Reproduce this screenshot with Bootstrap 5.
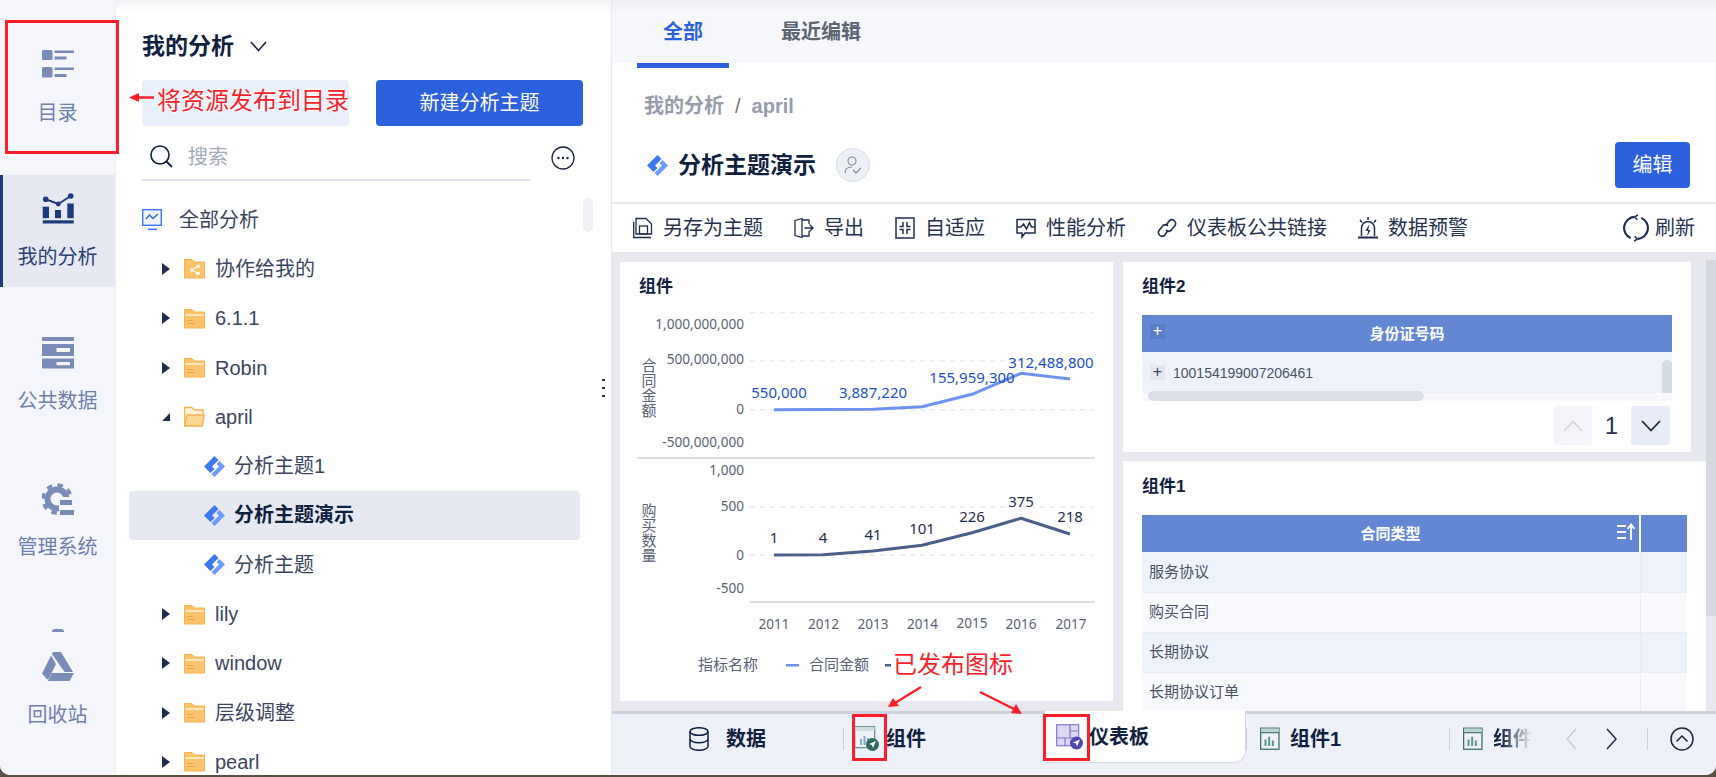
<!DOCTYPE html>
<html lang="zh-CN">
<head>
<meta charset="utf-8">
<title>我的分析</title>
<link rel="stylesheet" href="https://cdn.jsdelivr.net/npm/bootstrap@5.3.0/dist/css/bootstrap.min.css">
<style>
html,body{height:777px;overflow:hidden;background:#5b5140}
body{font-family:"Liberation Sans","Noto Sans CJK SC",sans-serif;font-size:20px;color:#3a4560;line-height:28px}
.app-root{position:relative;width:1716px;height:775px;background:#fff;border-radius:0 0 10px 10px;overflow:hidden}
.side-rail{width:116px;background:#f4f6fb;border-right:1px solid #eceef3;padding-top:31px}
.rail-item{height:112px;padding-top:18px;color:#6f7fae;flex:none}
.rail-item svg{display:block;height:32px;margin-bottom:18px}
.rail-on{background:#e6e9f2;border-left:3px solid #1f3a7a;color:#2b3f74;padding-right:3px}
.gap-32{margin-top:32px}.gap-34{margin-top:34px}.gap-56{margin-top:56px}
.dome{position:absolute;left:52px;top:629px;width:12px;height:3px;border-radius:6px 6px 0 0;background:#7a8bb8}
.tree-side{width:495px;position:relative;background:linear-gradient(#f1f2f4,#fff 12px);padding-top:30px;overflow:hidden}
.tree-head{height:32px;padding-left:26px;color:#10213f;font-size:23px}
.btn-pair{margin:18px 0 0 26px;gap:27px}
.btn-pale{width:207px;height:46px;background:#eaf0fb;border-radius:4px}
.btn-blue{width:207px;height:46px;background:#2c60dc;border:0;border-radius:4px;font-size:20px;line-height:28px;color:#fff;padding:0}
.find-line{margin:8px 0 0 26px;width:388px;height:47px;padding:0 0 0 8px;border-bottom:2px solid #dfe2ea;color:#a3a9b7;gap:15px}
.dots-circle{position:absolute;left:435px;top:146px}
.tree-list{margin-top:14px}
.tree-item{height:49.3px;margin-left:13px;width:451px;border-radius:4px}
.lv0{padding-left:13px;gap:17px}
.lv1{padding-left:33px}
.lv2{padding-left:75px;gap:9px}
.tree-pick{background:#e6e9f2;color:#10213f;font-weight:700}
.tri{width:8px;height:12px;margin-right:14px;flex:none}
.fold{width:21px;height:21px;margin-right:10px;flex:none}
.thumb-v{position:absolute;left:467px;top:198px;width:10px;height:34px;border-radius:5px;background:#f0f1f5}
.drag-dots{position:absolute;left:486px;top:376px;width:3px;height:22px;background:radial-gradient(circle,#1b2740 1.2px,transparent 1.5px) 0 0/3px 8px repeat-y}
.main-side{flex:1;min-width:0;border-left:1px solid #e8e9ef}
.tab-strip{height:63px;background:linear-gradient(#eff0f3,#f7f8fc 12px);font-weight:700;padding-left:25px}
.tab-a{width:92px;color:#2c60dc}
.tab-b{margin-left:52px;width:80px;color:#5d6472}
.tab-mark{height:5px;width:92px;margin-left:25px;background:#2c60dc}
.crumb{height:74px;padding:24px 0 0 32px;font-weight:700;color:#969ca9}
.crumb i{font-style:normal;margin:0 11px;font-weight:400;color:#6a7080}
.title-line{height:46px;padding:0 26px 0 35px;margin-bottom:14px;color:#10213f;font-size:23px}
.title-line b{margin-left:10px}
.who{width:34px;height:34px;border-radius:50%;background:#edf0f4;border:1px solid #d9dde5;margin-left:20px}
.btn-edit{width:75px;height:46px;background:#2c60dc;border:0;border-radius:4px;color:#fff;font-size:20px;padding:0}
.tool-line{height:50px;border-top:2px solid #e8e9f0;padding:0 21px 0 21px;gap:31px}
.tool-it{gap:10px;color:#26324f}
.tool-it svg{width:20px;height:22px;flex:none}
.refresh-it{gap:6px}
.tool-it .spin-ic{width:26px;height:28px}
.work{height:459px;background:#e8e9ee;padding:10px 0 0 8px;position:relative;overflow:hidden;gap:10px}
.panel-chart{width:493px;height:439px;background:#fff;flex:none}
.panel-chart svg{display:block}
.right-stack{width:583px;flex:none;gap:9px}
.panel-a{width:568px;height:190px;background:#fff;padding:0 19px;position:relative}
.panel-b{width:583px;height:250px;background:#fff;padding:0 19px}
.pn-title{font-size:17px;font-weight:700;color:#10213f;height:53px;padding-top:11px;line-height:28px}
.pn-title-b{padding-top:12px}
.rail-thumb{position:absolute;right:0;top:8px;width:10px;height:356px;background:#d5d8df}
.head-blue{height:37px;width:530px;background:#6387d2;color:#fff;font-size:15px;font-weight:700;position:relative}
.plus-hd{position:absolute;left:8px;top:9px;width:15px;height:15px;background:#5a7dc8;font-weight:400;font-size:17px;line-height:14px;text-align:center}
.row-a{height:41px;width:530px;background:#eef2fb;font-size:14px;color:#4a5268;position:relative;padding-left:8px}
.plus-bx{width:15px;height:15px;background:#e4e7ef;font-size:16px;line-height:14px;text-align:center;color:#3a4560;margin-right:8px}
.row-foot{height:8px;width:530px;background:#f7f9fd;position:relative}
.sc-h{position:absolute;left:6px;top:-2px;width:276px;height:10px;border-radius:5px;background:#dcdfe8}
.sc-v{position:absolute;right:0;top:8px;width:10px;height:36px;border-radius:5px;background:#d6dae3}
.pager{margin-top:5px;width:528px;height:39px;color:#26324f;font-size:24px}
.pg-off{width:38px;height:39px;border-radius:3px;background:#f3f5fa}
.pg-on{width:39px;height:39px;border-radius:3px;background:#e8ecf6}
.pg-num{width:39px;text-align:center}
.data-grid{width:545px;border-collapse:collapse;margin:1px 0 0;table-layout:fixed;--bs-table-bg:transparent}
.col-wide{width:498px}
.col-thin{width:47px}
.data-grid th{height:37px;background:#6387d2;color:#fff;font-size:15px;font-weight:700;text-align:center;vertical-align:middle;padding:0;border:0;border-right:2px solid #fff;position:relative;line-height:20px}
.data-grid th:last-child{border-right:0}
.data-grid td{height:40px;padding:0 7px;font-size:15px;color:#4a5268;border:0;border-right:1px solid #e8ecf5;border-bottom:1px solid #e8ecf5;line-height:20px;vertical-align:middle}
.data-grid tr:nth-child(odd) td{background:#eef2fb}
.data-grid tr:nth-child(even) td{background:#f7f9fd}
.data-grid td:last-child{border-right:0}
.sort-ic{position:absolute;right:4px;top:8px}
.dock{height:64px;background:#eef1f7;border-top:3px solid #cdd2de;padding-bottom:12px;position:relative;color:#10213f;font-weight:700}
.dock-cell{height:49px;flex:none}
.dk-a{width:231px;justify-content:center;gap:17px}
.dk-b{width:201px;padding-left:10px;position:relative}
.dk-c{width:201px;padding-left:11px;background:#fff;margin-top:-3px;height:52px;border:1px solid #d5d9e3;border-top:0;border-left:0;border-radius:0 0 12px 0}
.dk-d{width:202px;padding-left:13px}
.dk-e{width:82px;padding-left:13px;overflow:hidden;-webkit-mask-image:linear-gradient(90deg,#000 62%,transparent);mask-image:linear-gradient(90deg,#000 62%,transparent)}
.dk-tx{margin-left:8px}
.dk-tx-b{margin-left:6px}
.dk-sep{width:1px;height:22px;background:#c9ced9;flex:none}
.dk-nav{padding-left:33px}
.dk-nav .sp1{margin-left:29px}
.dk-nav .dk-sep{margin-left:29px}
.dk-nav .up{margin-left:22px}
.mark-box{position:absolute;border:3px solid #fb1f2b}
.mark-a{left:5px;top:20px;width:114px;height:134px}
.mark-b{left:852px;top:714px;width:35px;height:47px}
.mark-c{left:1043px;top:714px;width:47px;height:47px}
.note{position:absolute;font-size:24px;line-height:30px;color:#fb1f2b;text-shadow:0 0 2px #fff,0 0 3px #fff,1px 1px 1px #fff,-1px -1px 1px #fff}
.note-a{left:157px;top:86px}
.note-b{left:893px;top:650px}
.arrows{position:absolute;left:0;top:0;pointer-events:none}
svg text{font-family:"Noto Sans","Noto Sans CJK SC",sans-serif}
svg .cjk-t{font-family:"Noto Sans CJK SC",sans-serif}
svg .v-txt{font-family:"Noto Sans CJK SC",sans-serif;writing-mode:vertical-rl}
</style>
</head>
<body>
<svg width="0" height="0" class="position-absolute">
<defs>
<symbol id="tri-r" viewBox="0 0 8 12"><path d="M0 0L8 6L0 12Z" fill="#1f2d4d"/></symbol>
<symbol id="tri-d" viewBox="0 0 8 12"><path d="M8 2V10H0Z" fill="#1f2d4d"/></symbol>
<symbol id="folder" viewBox="0 0 21 21"><path d="M.5 1.5h7.5l2.5 2.5h10v16H.5Z" fill="#fdc36b" stroke="#f6b14c"/><rect x="1.5" y="6" width="18" height="2" fill="#ffe8bd"/><rect x="3" y="12" width="6" height="1" fill="#eaa548"/><rect x="3" y="15" width="8" height="1" fill="#eaa548"/></symbol>
<symbol id="gem" viewBox="0 0 21 21"><path d="M10.500 0L14.500 4L8 10.500L10.500 13L6.500 17L0 10.500Z" fill="#3f77f0"/><path d="M15.500 5L21 10.500L10.500 21L7.500 18L15 10.500L12.500 8Z" fill="#6d9bff"/></symbol>
<symbol id="sheet" viewBox="0 0 24 25"><rect x=".7" y=".7" width="20" height="23" fill="none" stroke="#3d6f6a" stroke-width="1.4"/><rect x="1" y="1" width="19.5" height="4.5" fill="#bcd3cf"/><rect x="1" y="5" width="19.5" height="1.2" fill="#3d6f6a"/><path d="M6 13v7M10 10v10M14 14v6" stroke="#5a9690" stroke-width="2.2"/></symbol>
</defs>
</svg>
<div class="app-root d-flex">
  <aside class="side-rail d-flex flex-column flex-shrink-0 text-center">
    <div class="rail-item d-flex flex-column align-items-center">
      <svg width="32" viewBox="0 0 32 32" fill="#7a8bb8"><rect y="1" width="10.5" height="10" rx="1.5"/><rect x="12.5" y="1.5" width="19.5" height="2.5"/><rect x="12.5" y="7.5" width="12" height="3"/><rect y="18" width="10.5" height="10.5" rx="1.5"/><rect x="12.5" y="18.5" width="19.5" height="2.5"/><rect x="12.5" y="25" width="12" height="3"/></svg>
      <span>目录</span>
    </div>
    <div class="rail-item rail-on gap-32 d-flex flex-column align-items-center">
      <svg width="34" viewBox="41 193 34 32" fill="#1f3a7a"><polyline points="45.7,199.3 58.3,204 70.7,196" fill="none" stroke="#1f3a7a" stroke-width="2"/><circle cx="45.7" cy="199.3" r="2.8"/><circle cx="58.3" cy="204" r="2.4"/><circle cx="70.7" cy="196" r="2.8"/><rect x="42.7" y="206.7" width="6.3" height="11.5"/><rect x="55" y="210" width="6" height="8.2"/><rect x="67.3" y="203.5" width="6.4" height="14.7"/><rect x="42.7" y="220.3" width="31" height="3.2"/></svg>
      <span>我的分析</span>
    </div>
    <div class="rail-item gap-32 d-flex flex-column align-items-center">
      <svg width="32" viewBox="42 337 32 32"><rect x="42" y="337" width="32" height="4" fill="#7a8bb8"/><rect x="42" y="344" width="32" height="12" fill="#7a8bb8"/><rect x="56.5" y="348" width="13.5" height="4" fill="#f4f6fb"/><rect x="42" y="358.500" width="32" height="10" fill="#7a8bb8"/><rect x="56.5" y="362" width="13.500" height="3.200" fill="#f4f6fb"/></svg>
      <span>公共数据</span>
    </div>
    <div class="rail-item gap-34 d-flex flex-column align-items-center">
      <svg width="32" viewBox="0 0 32 32"><circle cx="15" cy="16" r="9.500" fill="none" stroke="#7a8bb8" stroke-width="6"/><circle cx="15" cy="16" r="14" fill="none" stroke="#7a8bb8" stroke-width="3.500" stroke-dasharray="5.500 5.500"/><rect x="17" y="14" width="15" height="18" fill="#f4f6fb"/><rect x="18" y="17" width="12" height="5" fill="#7a8bb8"/><rect x="18" y="27" width="14" height="5" fill="#7a8bb8"/></svg>
      <span>管理系统</span>
    </div>
    <div class="rail-item gap-56 d-flex flex-column align-items-center">
      <svg width="32" viewBox="0 -1 32 32" fill="#7a8bb8"><path d="M11 0H19L31 20H22.500L10 2Z"/><path d="M9 3.500L14 12L6.500 27.500Q4 27 3 25L0 21.500Z"/><path d="M10 21H32L27.500 29H6Z"/></svg>
      <span>回收站</span>
    </div>
    <div class="dome"></div>
  </aside>

  <section class="tree-side flex-shrink-0">
    <div class="tree-head d-flex align-items-center fw-bold">
      <span>我的分析</span>
      <svg class="ms-3" width="17" height="11" viewBox="0 0 17 11"><path d="M1 1L8.500 9.500L16 1" fill="none" stroke="#1b2740" stroke-width="1.600"/></svg>
    </div>
    <div class="btn-pair d-flex">
      <div class="btn-pale"></div>
      <button class="btn btn-blue" type="button">新建分析主题</button>
    </div>
    <div class="find-line d-flex align-items-center">
      <svg width="23" height="23" viewBox="0 0 23 23"><circle cx="10" cy="10" r="9" fill="none" stroke="#10213f" stroke-width="1.600"/><path d="M16.500 16.500L22 22" stroke="#10213f" stroke-width="1.800"/></svg>
      <span>搜索</span>
    </div>
    <svg class="dots-circle" width="24" height="24" viewBox="0 0 24 24"><circle cx="12" cy="12" r="11" fill="none" stroke="#1b2740" stroke-width="1.300"/><circle cx="7.500" cy="12" r="1.200" fill="#1b2740"/><circle cx="12" cy="12" r="1.200" fill="#1b2740"/><circle cx="16.500" cy="12" r="1.200" fill="#1b2740"/></svg>
    <div class="thumb-v"></div>
    <div class="drag-dots"></div>
    <div class="tree-list">
      <div class="tree-item lv0 d-flex align-items-center">
        <svg width="20" height="22" viewBox="0 0 20 22" class="flex-shrink-0"><rect x=".7" y=".7" width="18.600" height="15.600" fill="#eef3fd" stroke="#3f77f0" stroke-width="1.400"/><path d="M4 10L7.500 6L11 9.500L16 5" fill="none" stroke="#2c60dc" stroke-width="1.400"/><rect x="6" y="19.500" width="9" height="1.600" fill="#3f77f0"/></svg>
        <span>全部分析</span>
      </div>
      <div class="tree-item lv1 d-flex align-items-center">
        <svg class="tri"><use href="#tri-r"/></svg>
        <svg class="fold" viewBox="0 0 21 21"><path d="M.5 1.500h7.500l2.500 2.500h10v16H.5Z" fill="#fdc36b" stroke="#f6b14c"/><circle cx="8" cy="12" r="1.800" fill="#fff"/><circle cx="14" cy="8.500" r="1.800" fill="#fff"/><circle cx="14" cy="15.500" r="1.800" fill="#fff"/><path d="M8 12L14 8.500M8 12L14 15.500" stroke="#fff"/></svg>
        <span>协作给我的</span>
      </div>
      <div class="tree-item lv1 d-flex align-items-center"><svg class="tri"><use href="#tri-r"/></svg><svg class="fold"><use href="#folder"/></svg><span>6.1.1</span></div>
      <div class="tree-item lv1 d-flex align-items-center"><svg class="tri"><use href="#tri-r"/></svg><svg class="fold"><use href="#folder"/></svg><span>Robin</span></div>
      <div class="tree-item lv1 d-flex align-items-center">
        <svg class="tri"><use href="#tri-d"/></svg>
        <svg class="fold" viewBox="0 0 21 21"><path d="M.7 20V1.500h7.300l2.500 2.500h8.500v4" fill="#fff3dc" stroke="#f6b14c" stroke-width="1.300"/><path d="M.7 20L3 9h17.300l-2 11Z" fill="#ffd993" stroke="#f6b14c" stroke-width="1.300"/></svg>
        <span>april</span>
      </div>
      <div class="tree-item lv2 d-flex align-items-center"><svg width="21" height="21" class="flex-shrink-0"><use href="#gem"/></svg><span>分析主题1</span></div>
      <div class="tree-item lv2 tree-pick d-flex align-items-center"><svg width="21" height="21" class="flex-shrink-0"><use href="#gem"/></svg><span>分析主题演示</span></div>
      <div class="tree-item lv2 d-flex align-items-center"><svg width="21" height="21" class="flex-shrink-0"><use href="#gem"/></svg><span>分析主题</span></div>
      <div class="tree-item lv1 d-flex align-items-center"><svg class="tri"><use href="#tri-r"/></svg><svg class="fold"><use href="#folder"/></svg><span>lily</span></div>
      <div class="tree-item lv1 d-flex align-items-center"><svg class="tri"><use href="#tri-r"/></svg><svg class="fold"><use href="#folder"/></svg><span>window</span></div>
      <div class="tree-item lv1 d-flex align-items-center"><svg class="tri"><use href="#tri-r"/></svg><svg class="fold"><use href="#folder"/></svg><span>层级调整</span></div>
      <div class="tree-item lv1 d-flex align-items-center"><svg class="tri"><use href="#tri-r"/></svg><svg class="fold"><use href="#folder"/></svg><span>pearl</span></div>
    </div>
  </section>

  <main class="main-side d-flex flex-column">
    <div class="tab-strip d-flex align-items-center">
      <div class="tab-a text-center">全部</div>
      <div class="tab-b text-nowrap">最近编辑</div>
    </div>
    <div class="tab-mark"></div>
    <div class="crumb">我的分析<i>/</i>april</div>
    <div class="title-line d-flex align-items-center">
      <svg width="21" height="23" viewBox="0 0 21 21"><use href="#gem"/></svg>
      <b>分析主题演示</b>
      <div class="who d-flex align-items-center justify-content-center">
        <svg width="18" height="20" viewBox="0 0 18 20"><circle cx="8" cy="6" r="4" fill="none" stroke="#7c8698" stroke-width="1.100"/><path d="M1 18c0-4 3-6 7-6" fill="none" stroke="#7c8698" stroke-width="1.100"/><path d="M9 15l3 3l5-5" fill="none" stroke="#7c8698" stroke-width="1.100"/></svg>
      </div>
      <button class="btn btn-edit ms-auto" type="button">编辑</button>
    </div>
    <div class="tool-line d-flex align-items-center">
      <div class="tool-it d-flex align-items-center">
        <svg viewBox="0 0 20 22" fill="none" stroke="#1f2d4d" stroke-width="1.300"><path d="M3 17V1.500H13L18.500 7V17Z"/><rect x="6.500" y="9" width="8" height="8"/><path d="M.7 5V20.500H18"/></svg><span>另存为主题</span>
      </div>
      <div class="tool-it d-flex align-items-center">
        <svg viewBox="0 0 20 22" fill="none" stroke="#1f2d4d" stroke-width="1.300"><path d="M1 3.500L8 1.500V20.500L1 18.500Z"/><path d="M8 3H15V7M15 14V19H8"/><path d="M10.500 11H19M15.500 7.500L19 11L15.500 14.500"/></svg><span>导出</span>
      </div>
      <div class="tool-it d-flex align-items-center">
        <svg viewBox="0 0 20 22" fill="none" stroke="#1f2d4d" stroke-width="1.500"><rect x="1" y="1" width="18" height="20"/><path d="M8 5V9.500H4.500M12 5V9.500H15.500M8 17V12.500H4.500M12 17V12.500H15.500"/></svg><span>自适应</span>
      </div>
      <div class="tool-it d-flex align-items-center">
        <svg viewBox="0 0 20 22" fill="none" stroke="#1f2d4d" stroke-width="1.500"><path d="M1 2.500H19V16H9L6 20V16H1Z"/><path d="M1 10L5 10L7.500 7L10.500 12L13.500 5.500L15.500 10L19 10"/></svg><span>性能分析</span>
      </div>
      <div class="tool-it d-flex align-items-center">
        <svg viewBox="0 0 20 22" fill="none" stroke="#1f2d4d" stroke-width="1.600"><path d="M9 8.500L12.500 3.500A3.800 3.800 0 0 1 18 8.500L14 13.500A3.800 3.800 0 0 1 9 13"/><path d="M11 13.500L7.500 18.500A3.800 3.800 0 0 1 2 13.500L6 8.500A3.800 3.800 0 0 1 11 9"/></svg><span>仪表板公共链接</span>
      </div>
      <div class="tool-it d-flex align-items-center">
        <svg viewBox="0 0 20 22" fill="none" stroke="#1f2d4d" stroke-width="1.500"><path d="M3.500 19V11A6.500 6.500 0 0 1 16.500 11V19"/><path d="M0 20.500H20" stroke-width="2"/><path d="M10 0V3M2 3L4 5.500M18 3L16 5.500"/><path d="M11 8.500L8 13.500H12L9.500 18" fill="#1f2d4d" stroke-width=".8"/></svg><span>数据预警</span>
      </div>
      <div class="tool-it refresh-it d-flex align-items-center ms-auto">
        <svg class="spin-ic" viewBox="0 0 27 28" fill="none" stroke="#1f2d4d" stroke-width="2.200"><path d="M12 2.500A11.500 11.500 0 0 0 8 24.500"/><path d="M15 25.500A11.500 11.500 0 0 0 19 3.500"/><path d="M12 2.500L15.500 0.500M12 2.500L15 5.500M15 25.500L11.500 27.500M15 25.500L12 22.500" stroke-width="1.500"/></svg><span>刷新</span>
      </div>
    </div>

    <div class="work d-flex">
      <div class="panel-chart">
        <svg width="493" height="439" viewBox="620 262 493 439">
          <text class="cjk-t" x="639" y="292" font-size="17" font-weight="700" fill="#10213f">组件</text>
          <g stroke="#e8e9ee" stroke-width="1.500" stroke-dasharray="5 5">
            <path d="M750 312.700H1093M750 361H1093M750 409.700H1093M750 507H1093M750 555H1093"/>
          </g>
          <path d="M637 458H1095" stroke="#cfd1d6" stroke-width="1.500"/>
          <path d="M750 602H1095" stroke="#cfd1d6" stroke-width="1.500"/>
          <g font-size="13.600" fill="#5a6275" text-anchor="end">
            <text x="744" y="329">1,000,000,000</text>
            <text x="744" y="364">500,000,000</text>
            <text x="744" y="414">0</text>
            <text x="744" y="447">-500,000,000</text>
            <text x="744" y="475">1,000</text>
            <text x="744" y="511">500</text>
            <text x="744" y="560">0</text>
            <text x="744" y="593">-500</text>
          </g>
          <text class="v-txt" x="649" y="358" font-size="15" fill="#5a6275">合同金额</text>
          <text class="v-txt" x="649" y="503" font-size="15" fill="#5a6275">购买数量</text>
          <polyline points="774,409.700 823,409.500 873,409.300 922,406.700 972,394.300 1021,373.300 1070,379" fill="none" stroke="#6d92f0" stroke-width="3" stroke-linejoin="round"/>
          <polyline points="774,555 823,554.700 873,551 922,545.300 972,532.700 1021,518.300 1070,534" fill="none" stroke="#4a6088" stroke-width="3" stroke-linejoin="round"/>
          <g font-size="15" fill="#2350c9" text-anchor="middle">
            <text x="779" y="398">550,000</text>
            <text x="873" y="398">3,887,220</text>
            <text x="972" y="383">155,959,300</text>
            <text x="1051" y="368">312,488,800</text>
          </g>
          <g font-size="15" fill="#1f2d4d" text-anchor="middle">
            <text x="774" y="543">1</text><text x="823" y="543">4</text><text x="873" y="540">41</text><text x="922" y="534">101</text><text x="972" y="522">226</text><text x="1021" y="507">375</text><text x="1070" y="522">218</text>
          </g>
          <g font-size="13.500" fill="#5a6275" text-anchor="middle">
            <text x="774" y="629">2011</text><text x="823.500" y="629">2012</text><text x="873" y="629">2013</text><text x="922.500" y="629">2014</text><text x="972" y="628">2015</text><text x="1021" y="629">2016</text><text x="1071" y="629">2017</text>
          </g>
          <g font-size="15" fill="#5a6275">
            <text class="cjk-t" x="698" y="670">指标名称</text>
            <text class="cjk-t" x="809" y="670">合同金额</text>
          </g>
          <rect x="786" y="664" width="13" height="2.500" fill="#6d92f0"/>
          <rect x="885" y="664" width="6" height="2.500" fill="#4a6088"/>
        </svg>
      </div>
      <div class="right-stack d-flex flex-column">
        <div class="panel-a">
          <div class="pn-title">组件2</div>
          <div class="head-blue d-flex align-items-center justify-content-center"><span class="plus-hd">+</span>身份证号码</div>
          <div class="row-a d-flex align-items-center"><span class="plus-bx">+</span>100154199007206461<span class="sc-v"></span></div>
          <div class="row-foot"><span class="sc-h"></span></div>
          <div class="pager d-flex align-items-center justify-content-end">
            <div class="pg-off d-flex align-items-center justify-content-center"><svg width="20" height="12" viewBox="0 0 20 12"><path d="M1 11L10 1.500L19 11" fill="none" stroke="#d4d6da" stroke-width="1.800"/></svg></div>
            <div class="pg-num">1</div>
            <div class="pg-on d-flex align-items-center justify-content-center"><svg width="20" height="12" viewBox="0 0 20 12"><path d="M1 1L10 10.500L19 1" fill="none" stroke="#1b2740" stroke-width="1.800"/></svg></div>
          </div>
        </div>
        <div class="panel-b">
          <div class="pn-title pn-title-b">组件1</div>
          <table class="table data-grid">
            <colgroup><col class="col-wide"><col class="col-thin"></colgroup>
            <thead><tr>
              <th>合同类型
                <svg class="sort-ic" width="18" height="18" viewBox="0 0 18 18" fill="none" stroke="#fff" stroke-width="1.800"><path d="M0 3H9M0 9H9M0 15H9M14 17V2M10.500 6L14 1.500L17.500 6"/></svg>
              </th><th></th>
            </tr></thead>
            <tbody>
              <tr><td>服务协议</td><td></td></tr>
              <tr><td>购买合同</td><td></td></tr>
              <tr><td>长期协议</td><td></td></tr>
              <tr><td>长期协议订单</td><td></td></tr>
            </tbody>
          </table>
        </div>
      </div>
      <div class="rail-thumb"></div>
    </div>

    <div class="dock d-flex align-items-start">
      <div class="dock-cell dk-a d-flex align-items-center">
        <svg width="20" height="24" viewBox="0 0 20 24" fill="none" stroke="#10213f" stroke-width="1.500"><ellipse cx="10" cy="4.500" rx="9" ry="3.800"/><path d="M1 4.500V19.500C1 21.500 5 23.300 10 23.300S19 21.500 19 19.500V4.500"/><path d="M1 12C1 14 5 15.800 10 15.800S19 14 19 12"/></svg>
        <span>数据</span>
      </div>
      <div class="dk-sep align-self-center"></div>
      <div class="dock-cell dk-b d-flex align-items-center">
        <svg width="26" height="26" viewBox="0 0 26 26" class="flex-shrink-0"><rect x=".7" y=".7" width="20" height="21" fill="none" stroke="#5c8a85" stroke-width="1.200"/><rect x="1" y="1" width="19.500" height="4" fill="#cfdeda"/><path d="M7 19v-6M10.500 19v-9M14 19v-7" stroke="#7dacc4" stroke-width="2"/><circle cx="18.500" cy="18.500" r="6.500" fill="#2f6a5e"/><path d="M15 18L22 15L19 22L18 19Z" fill="#fff"/></svg>
        <span class="dk-tx-b">组件</span>
      </div>
      <div class="dock-cell dk-c d-flex align-items-center">
        <svg width="27" height="26" viewBox="0 0 27 26" class="flex-shrink-0"><rect x=".7" y=".7" width="22" height="21" fill="#dcdaf3" stroke="#7f78c8" stroke-width="1.200"/><path d="M14 1V14M1 14H23M14 7H23M9 14V22" stroke="#7f78c8" stroke-width="1.200"/><circle cx="20.500" cy="19" r="6.500" fill="#4e45b6"/><path d="M17 18.500L24 15.500L21 22.500L20 19.500Z" fill="#fff"/></svg>
        <span class="dk-tx-b">仪表板</span>
      </div>
      <div class="dk-sep align-self-center"></div>
      <div class="dock-cell dk-d d-flex align-items-center">
        <svg width="22" height="24" class="flex-shrink-0"><use href="#sheet"/></svg>
        <span class="dk-tx">组件1</span>
      </div>
      <div class="dk-sep align-self-center"></div>
      <div class="dock-cell dk-e d-flex align-items-center">
        <svg width="22" height="24" class="flex-shrink-0"><use href="#sheet"/></svg>
        <span class="dk-tx text-nowrap">组件</span>
      </div>
      <div class="dk-nav d-flex align-items-center flex-grow-1 align-self-center">
        <svg width="12" height="22" viewBox="0 0 12 22"><path d="M11 1L2 11L11 21" fill="none" stroke="#c6cbd6" stroke-width="1.500"/></svg>
        <svg class="sp1" width="12" height="22" viewBox="0 0 12 22"><path d="M1 1L10 11L1 21" fill="none" stroke="#1f2d4d" stroke-width="1.500"/></svg>
        <div class="dk-sep"></div>
        <svg class="up" width="24" height="24" viewBox="0 0 24 24" fill="none" stroke="#1b2740" stroke-width="1.500"><circle cx="12" cy="12" r="11"/><path d="M6.500 14.500L12 9L17.500 14.500"/></svg>
      </div>
    </div>
  </main>

  <div class="mark-box mark-a"></div>
  <div class="mark-box mark-b"></div>
  <div class="mark-box mark-c"></div>
  <div class="note note-a">将资源发布到目录</div>
  <div class="note note-b">已发布图标</div>
  <svg class="arrows" width="1716" height="775" viewBox="0 0 1716 775" fill="#fb1f2b" stroke="#fb1f2b">
    <path d="M136 97.500H154" stroke-width="2.500"/><path d="M129 97.500L139 93V102Z" stroke="none"/>
    <path d="M921 687L895 703" stroke-width="2.500"/><path d="M888 707L893 698L899 706Z" stroke="none"/>
    <path d="M980 692L1014 709" stroke-width="2.500"/><path d="M1022 714L1011 713L1016 704Z" stroke="none"/>
  </svg>
</div>
</body>
</html>
